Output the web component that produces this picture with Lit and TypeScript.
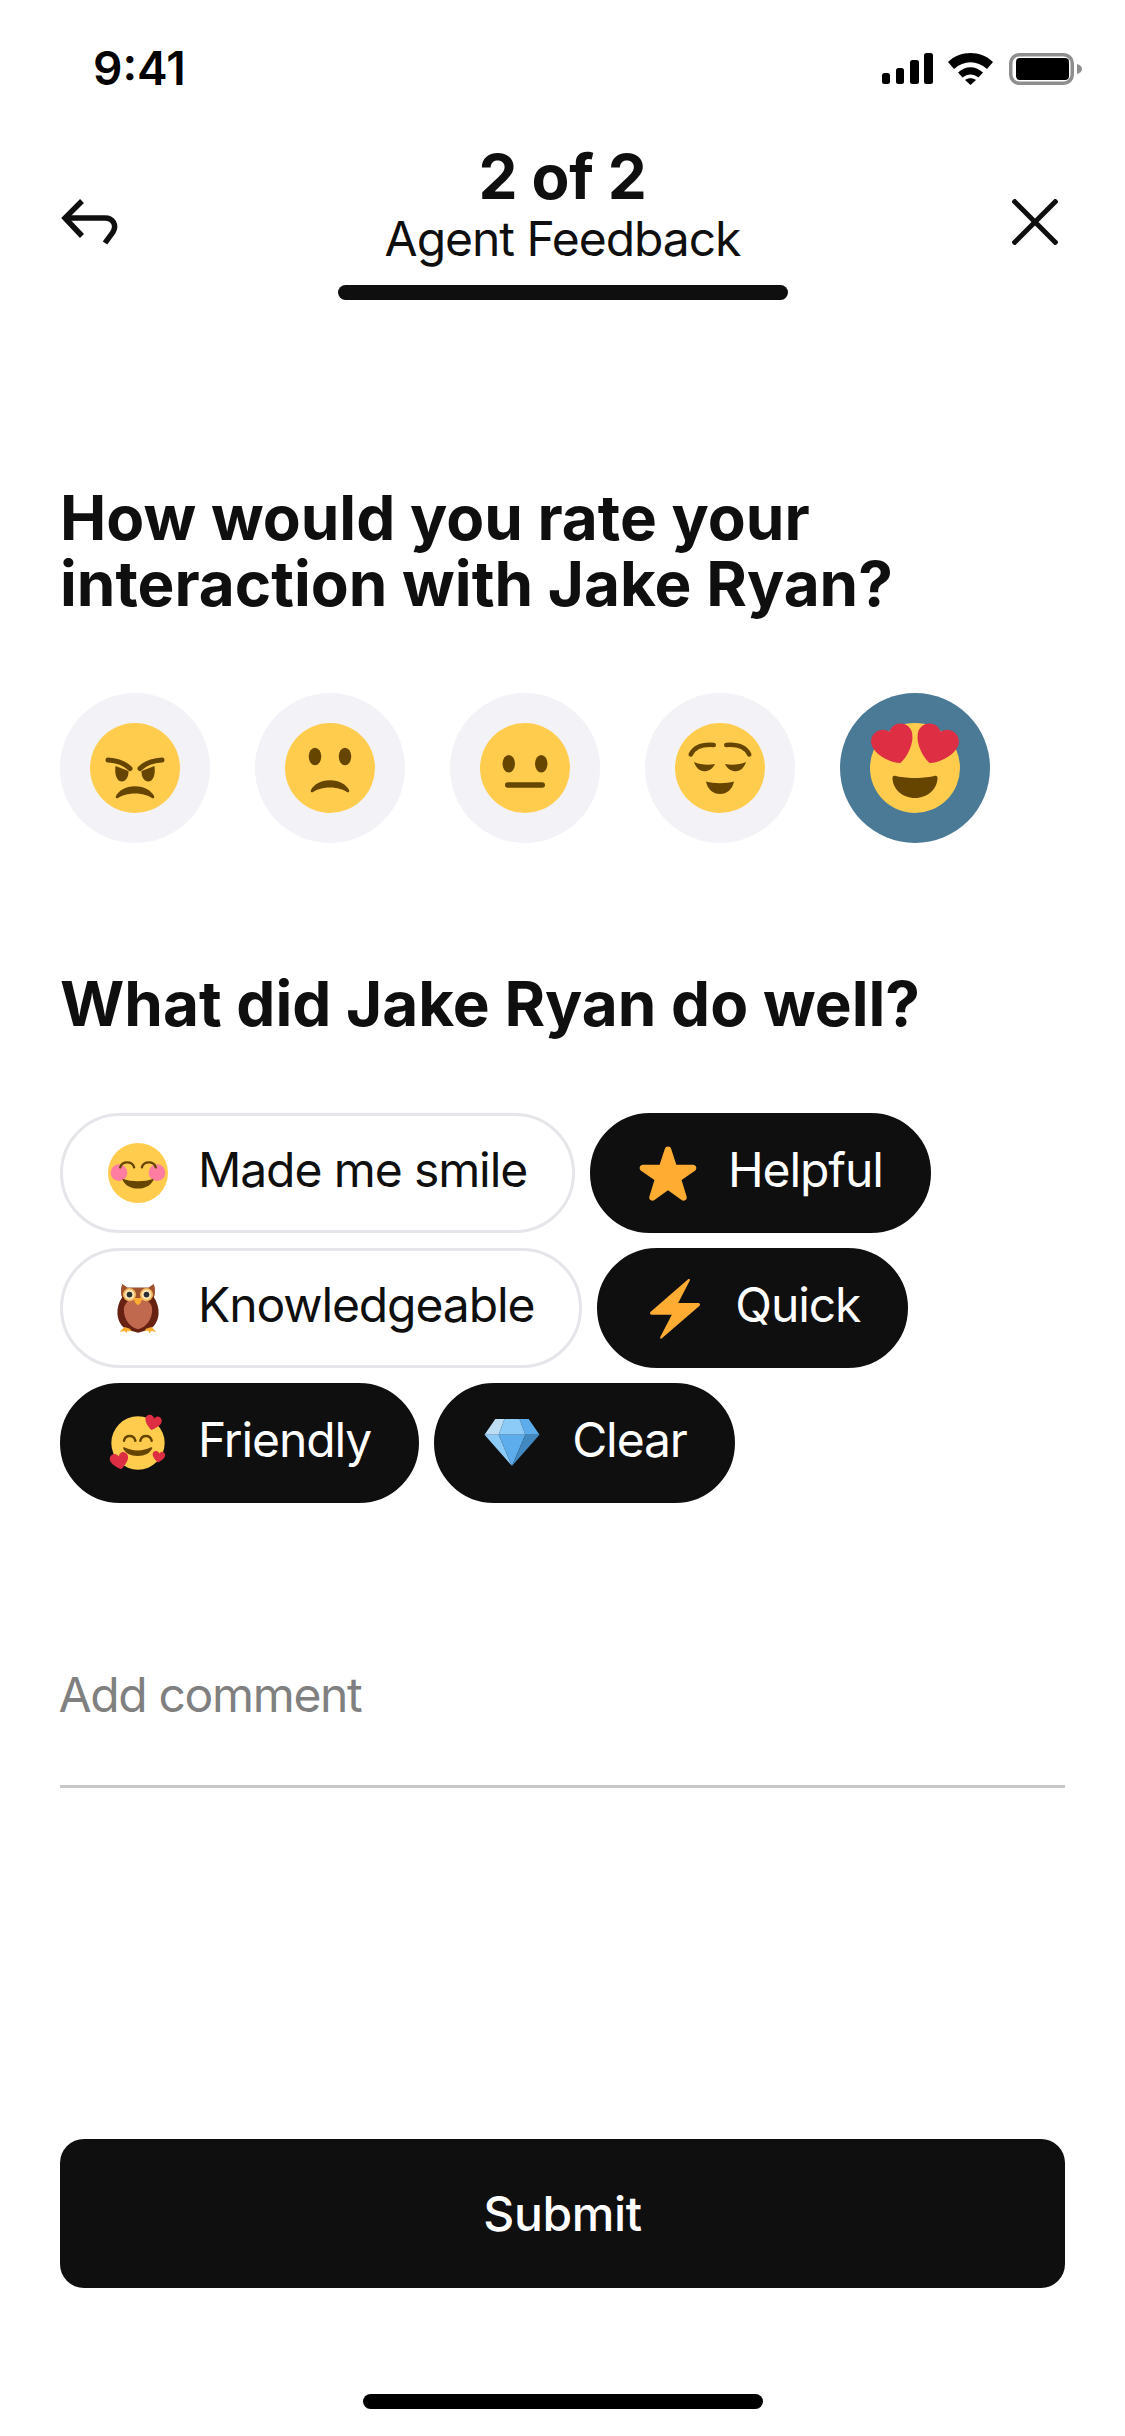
import { LitElement, html, css, svg } from "lit";
import { customElement } from "lit/decorators.js";

const F = "#FFCC4D";
const D = "#664500";
const R = "#DD2E44";
const face = svg`<circle cx="18" cy="18" r="18" fill="${F}"/>`;
const heart = (t: string) => svg`<path transform="${t}" fill="${R}" d="M0 -5.200C-1-8.400-4.600-9.800-7.400-8.200-10-6.700-10.800-3.400-9.600-.9-7.800 3-2.600 7.200.4 8.600 3.400 6.600 8 2.200 9.400-1.600 10.400-4.400 9.200-7.600 6.400-8.800 3.800-9.800 1-8.400 0-5.200Z"/>`;
const frown = "M10.400 30C10.200 29.600 10.300 29.300 10.500 29 11.500 27.200 14 25.300 18 25.300S24.500 27.200 25.500 29C25.700 29.300 25.800 29.600 25.600 30 25.200 30.200 24.900 30.100 24.600 29.900 23.500 29.100 21 28.200 18 28.200S12.500 29.100 11.400 29.900C11.100 30.100 10.800 30.200 10.400 30Z";

const icons: Record<string, unknown> = {
  angry: svg`${face}
    <path fill="none" stroke="${D}" stroke-width="2" stroke-linecap="round" d="M7.200 14.800C10.500 15 14 16.200 16 18.200M28.800 14.800C25.500 15 22 16.200 20 18.200"/>
    <path fill="${D}" d="M10.200 17.200 15.400 19.200C15.500 21.700 14.300 23.400 12.700 23.400 10.900 23.400 9.700 21 10.200 17.200Z"/>
    <path fill="${D}" d="M25.800 17.200 20.600 19.200C20.500 21.700 21.700 23.400 23.300 23.400 25.100 23.400 26.300 21 25.800 17.200Z"/>
    <path fill="${D}" d="${frown}"/>`,
  sad: svg`${face}
    <ellipse fill="${D}" cx="12" cy="13.400" rx="2.500" ry="3.500"/>
    <ellipse fill="${D}" cx="24" cy="13.400" rx="2.500" ry="3.500"/>
    <path fill="${D}" transform="translate(0 -2.400)" d="${frown}"/>`,
  neutral: svg`${face}
    <ellipse fill="${D}" cx="11.500" cy="16.300" rx="2.500" ry="3.500"/>
    <ellipse fill="${D}" cx="24.500" cy="16.300" rx="2.500" ry="3.500"/>
    <rect fill="${D}" x="10" y="23.700" width="16" height="2.200" rx="1.100"/>`,
  relieved: svg`${face}
    <path fill="none" stroke="${D}" stroke-width="1.800" stroke-linecap="round" d="M6.300 12.600C7.600 9.900 10.500 8.400 15.500 8.800M29.700 12.600C28.400 9.900 25.500 8.400 20.500 8.800"/>
    <path fill="${D}" d="M7.600 15.600C10 16.600 13 17 16 16.400 15 18.300 13.500 19.300 11.700 19.300 9.800 19.300 8.300 17.800 7.600 15.600Z"/>
    <path fill="${D}" d="M28.400 15.600C26 16.600 23 17 20 16.400 21 18.300 22.500 19.300 24.300 19.300 26.200 19.300 27.700 17.800 28.400 15.600Z"/>
    <path fill="${D}" d="M12.400 23.400C15.500 24.300 20.500 24.300 23.600 23.400 23 26.500 20.800 28.400 18 28.400S13 26.500 12.400 23.400Z"/>`,
  hearts: svg`${face}
    <path fill="${D}" d="M18 22c-3.600 0-6-.4-8-.9-.6-.1-1 .2-1 .9 0 4.200 3.800 8 9 8s9-3.800 9-8c0-.7-.4-1-1-.9-2 .5-4.400.9-8 .9Z"/>
    <path fill="${R}" d="M16.650 3.281c-.859-2.431-3.524-3.707-5.956-2.850-1.476.52-2.521 1.711-2.928 3.104-1.191-.829-2.751-1.100-4.225-.58C1.111 3.813-.167 6.480.692 8.911c.122.344.284.663.472.958 1.951 3.582 7.588 6.100 11.001 6.131 2.637-2.167 5.446-7.665 4.718-11.677-.038-.348-.113-.698-.233-1.042Z"/>
    <path fill="${R}" d="M19.350 3.281c.859-2.431 3.524-3.707 5.956-2.850 1.476.52 2.521 1.711 2.928 3.104 1.191-.829 2.751-1.100 4.225-.58 2.430.858 3.708 3.525 2.849 5.956-.122.344-.284.663-.472.958-1.951 3.582-7.588 6.100-11.001 6.131-2.637-2.167-5.446-7.665-4.718-11.677.038-.348.113-.698.233-1.042Z"/>`,
  blush: svg`${face}
    <circle cx="6.600" cy="17.800" r="5" fill="#FF7DA0"/>
    <circle cx="29.400" cy="17.800" r="5" fill="#FF7DA0"/>
    <path fill="none" stroke="${D}" stroke-width="1.400" stroke-linecap="round" d="M7.300 14.600C8.500 10.600 14.500 10.600 15.700 14.600M20.300 14.600C21.500 10.600 27.500 10.600 28.700 14.600"/>
    <path fill="${D}" d="M8.600 21.400C11.400 22.400 14.600 22.900 18 22.900S24.600 22.400 27.400 21.400C26.600 25 22.500 27.300 18 27.300S9.400 25 8.600 21.400Z"/>`,
  owl: svg`<g transform="translate(2.700 2.400) scale(.85 .87)">
    <path fill="#662113" d="M7 1.500 10.500 4h15L29 1.500c1 2.500 1 7 .2 9 2.300 3.300 3.600 7.500 3.300 11.500-.4 5-3 9-6.500 10.700l-8 2.300-8-2.300C6.500 31 3.900 27 3.500 22c-.3-4 1-8.200 3.300-11.500-.8-2-.8-6.500.2-9Z"/>
    <path fill="#A0522D" d="M6.900 1.500 10.500 4h15l3.600-2.500c.9 2 1 5.500.4 8-2.400 2.700-6 3.800-11.500 3.800S9 12.200 6.500 9.500C5.900 7 6 3.500 6.900 1.500Z"/>
    <path fill="#C1694F" d="M8 19c0-4.500 4.500-8 10-8s10 3.500 10 8c0 7-4.700 12.800-10 13.500C12.700 31.800 8 26 8 19Z"/>
    <circle cx="12" cy="8.700" r="4.600" fill="#F4B860"/><circle cx="24" cy="8.700" r="4.600" fill="#F4B860"/>
    <circle cx="12" cy="8.700" r="3.400" fill="#FFE8B6"/><circle cx="24" cy="8.700" r="3.400" fill="#FFE8B6"/>
    <circle cx="12" cy="8.700" r="2" fill="#292F33"/><circle cx="24" cy="8.700" r="2" fill="#292F33"/>
    <path fill="#FFAC33" d="M15.200 11h5.600c.4 1.500-1.500 4.500-2.800 5-1.300-.5-3.200-3.500-2.800-5ZM5 34.500l3.500-3.500 3.800 1.200 1.200 1.800-3-.3-.5 1.700-1.500-1.600ZM31 34.500 27.500 31l-3.800 1.200-1.200 1.800 3-.3.500 1.700 1.500-1.600Z"/>
  </g>`,
  star: svg`<path fill="#FFAC33" d="M27.287 34.627c-.404 0-.806-.124-1.152-.371L18 28.422l-8.135 5.834c-.693.496-1.623.496-2.312-.008-.689-.499-.979-1.385-.721-2.194l3.034-9.792-8.062-5.681c-.685-.505-.97-1.393-.708-2.203.264-.808 1.016-1.357 1.866-1.363L12.947 13l3.179-9.549c.268-.809 1.023-1.353 1.874-1.353.851 0 1.606.545 1.875 1.353L23 13l10.036.015c.853.006 1.606.556 1.867 1.363.263.81-.022 1.698-.708 2.203l-8.062 5.681 3.034 9.792c.26.809-.033 1.695-.72 2.194-.347.254-.753.379-1.160.379Z"/>`,
  bolt: svg`<path fill="#FFAC33" d="M32.938 15.651C32.792 15.260 32.418 15 32 15H19.925L26.894 1.458c.144-.281.057-.625-.205-.803-.262-.179-.616-.134-.824.104L3.250 20.341c-.274.315-.339.751-.167 1.131C3.250 21.857 3.629 22 4 22h12.075L9.106 35.542c-.144.281-.057.625.205.803.101.068.216.102.33.102.183 0 .363-.077.494-.226l22.615-19.582c.274-.315.339-.751.188-1.148Z"/>`,
  gem: svg`
    <path fill="#BDDDF4" d="M1.500 13 8 3.600h5.500L10 13Z"/>
    <path fill="#5DADEC" d="M34.500 13 28 3.600h-5.500L26 13Z"/>
    <path fill="#8CCAF7" d="M13.500 3.600h9L26 13H10Z"/>
    <path fill="#8CCAF7" d="M1.500 13H10l8 18.800Z"/>
    <path fill="#5DADEC" d="M10 13h16l-8 18.800Z"/>
    <path fill="#4289C1" d="M34.500 13H26l-8 18.800Z"/>`,
  friendly: svg`<circle cx="18" cy="18" r="16" fill="${F}"/>
    <path fill="none" stroke="${D}" stroke-width="1.500" stroke-linecap="round" d="M9.600 16.600C10.400 12.800 15.600 12.800 16.400 16.600M19.400 16.600C20.200 12.800 25.400 12.800 26.200 16.600"/>
    <path fill="${D}" d="M9 21C9 20.600 9.400 20.400 9.800 20.600 12 21.800 15 22.500 17.800 22.500S23.600 21.800 25.800 20.600C26.200 20.400 26.600 20.600 26.600 21 25.600 24 22 25.800 17.800 25.800S10 24 9 21Z"/>
    ${heart("translate(27 6) scale(.5) rotate(15)")}
    ${heart("translate(7 29) scale(.56) rotate(-10)")}
    ${heart("translate(30.400 26.400) scale(.38) rotate(10)")}`,
};

const em = (name: string) => html`<svg viewBox="0 0 36 36" aria-hidden="true">${icons[name]}</svg>`;

const rates = ["angry", "sad", "neutral", "relieved", "hearts"];
const chips = [
  { icon: "blush", label: "Made me smile", on: false },
  { icon: "star", label: "Helpful", on: true },
  { icon: "owl", label: "Knowledgeable", on: false },
  { icon: "bolt", label: "Quick", on: true },
  { icon: "friendly", label: "Friendly", on: true },
  { icon: "gem", label: "Clear", on: true },
];

@customElement("app-root")
export class AppRoot extends LitElement {
  static styles = css`
    :host {
      display: block;
      width: 1125px;
      height: 2436px;
      background: #fff;
      color: #0f0f0f;
      font-family: Inter, "Liberation Sans", sans-serif;
      overflow: hidden;
    }
    .screen { display: flex; flex-direction: column; height: 2436px; }
    .status {
      height: 135px;
      padding: 44px 43px 0 93px;
      box-sizing: border-box;
      display: flex;
      justify-content: space-between;
      align-items: flex-start;
    }
    .time { font-size: 46px; line-height: 48px; font-weight: 600; color: #000; }
    .status svg { display: block; margin-top: 9px; }
    .nav {
      height: 165px;
      padding: 0 60px;
      display: grid;
      grid-template-columns: 65px 1fr 65px;
      align-items: start;
    }
    .nav svg { display: block; margin-top: 62px; }
    .nav svg.close { justify-self: end; margin-top: 64px; margin-right: 7px; }
    .titles { display: flex; flex-direction: column; align-items: center; }
    .step { font-size: 62px; line-height: 66px; font-weight: 700; margin-top: 9px; letter-spacing: -0.4px; }
    .sub { font-size: 48px; line-height: 56px; margin-top: 1px; letter-spacing: -1.05px; }
    .bar { width: 450px; height: 15px; border-radius: 8px; background: #0f0f0f; margin-top: 18px; }
    .content { padding: 0 60px; display: flex; flex-direction: column; flex: 1; }
    h2 { margin: 0; font-size: 62px; line-height: 66px; font-weight: 700; letter-spacing: 0; }
    .q1 { margin-top: 185px; }
    .rates { display: flex; gap: 45px; margin-top: 76px; }
    .rate {
      width: 150px; height: 150px; border-radius: 50%;
      background: #f2f2f7;
      display: flex; align-items: center; justify-content: center;
    }
    .rate.on { background: #4a7a96; }
    .rate svg { width: 90px; height: 90px; display: block; overflow: visible; }
    .q2 { margin-top: 128px; }
    .chips { display: flex; flex-wrap: wrap; gap: 15px; margin-top: 76px; }
    .chip {
      height: 120px; box-sizing: border-box;
      border: 3px solid #e5e5ea;
      border-radius: 60px;
      padding: 0 45px;
      display: flex; align-items: center; gap: 30px;
      font-size: 48px;
      letter-spacing: -1.1px;
      color: #0f0f0f;
    }
    .chip span { margin-top: -8px; }
    .chip.on { background: #0f0f0f; border-color: #0f0f0f; color: #fff; }
    .chip svg { width: 60px; height: 60px; display: block; overflow: visible; flex: none; }
    .comment {
      margin-top: 160px;
      height: 125px;
      box-sizing: border-box;
      border-bottom: 3px solid #c8c8c8;
      font-size: 48px;
      line-height: 64px;
      letter-spacing: -1.35px;
      text-indent: -1.5px;
      color: #808080;
    }
    .submit {
      margin-top: auto;
      height: 149px;
      border-radius: 24px;
      background: #0f0f0f;
      color: #fff;
      font-size: 48px;
      font-weight: 500;
      letter-spacing: -0.35px;
      display: flex; align-items: center; justify-content: center;
    }
    .home { height: 148px; display: flex; justify-content: center; padding-top: 106px; box-sizing: border-box; }
    .home div { width: 400px; height: 15px; border-radius: 8px; background: #000; }
  `;

  render() {
    return html`<div class="screen">
      <div class="status">
        <span class="time">9:41</span>
        <svg width="200" height="32" viewBox="0 0 200 32" aria-hidden="true">
          <rect x="0" y="20" width="8" height="11" rx="2.500" fill="#000"/>
          <rect x="14" y="15" width="8" height="16" rx="2.500" fill="#000"/>
          <rect x="28" y="7" width="9" height="24" rx="2.500" fill="#000"/>
          <rect x="42" y="0" width="9" height="31" rx="2.500" fill="#000"/>
          <path fill="#000" d="M66 9C78-3 99-3 111 9L105 16C95 7 82 7 72 16Z"/>
          <path fill="#000" d="M76 19.500C84 12.500 93 12.500 101 19.500L96.500 24.500C91 20.500 86 20.500 80.500 24.500Z"/>
          <path fill="#000" d="M83 27C86.500 24.500 90.500 24.500 94 27L88.500 32Z"/>
          <rect x="128.750" y="1.750" width="61.500" height="28.500" rx="8.500" fill="none" stroke="#8e8e8e" stroke-width="3.500"/>
          <rect x="134" y="5" width="53" height="22" rx="4" fill="#000"/>
          <path fill="#8e8e8e" d="M195 11c2.800.8 5 2.500 5 5s-2.200 4.200-5 5Z"/>
        </svg>
      </div>
      <div class="nav">
        <svg width="60" height="50" viewBox="0 0 60 50" fill="none" stroke="#0f0f0f" stroke-width="5.500" aria-hidden="true">
          <path d="M22 4 5 21l17 18"/>
          <path d="M5 21H45C53 21 57 28 53 35L45 46"/>
        </svg>
        <div class="titles">
          <div class="step">2 of 2</div>
          <div class="sub">Agent Feedback</div>
          <div class="bar"></div>
        </div>
        <svg class="close" width="46" height="46" viewBox="0 0 46 46" fill="none" stroke="#0f0f0f" stroke-width="5" aria-hidden="true">
          <path d="M1 1l44 44M45 1 1 45"/>
        </svg>
      </div>
      <div class="content">
        <h2 class="q1">How would you rate your<br />interaction with Jake Ryan?</h2>
        <div class="rates">
          ${rates.map((r, i) => html`<div class="rate ${i === 4 ? "on" : ""}">${em(r)}</div>`)}
        </div>
        <h2 class="q2">What did Jake Ryan do well?</h2>
        <div class="chips">
          ${chips.map((c) => html`<div class="chip ${c.on ? "on" : ""}">${em(c.icon)}<span>${c.label}</span></div>`)}
        </div>
        <div class="comment">Add comment</div>
        <div class="submit">Submit</div>
      </div>
      <div class="home"><div></div></div>
    </div>`;
  }
}
